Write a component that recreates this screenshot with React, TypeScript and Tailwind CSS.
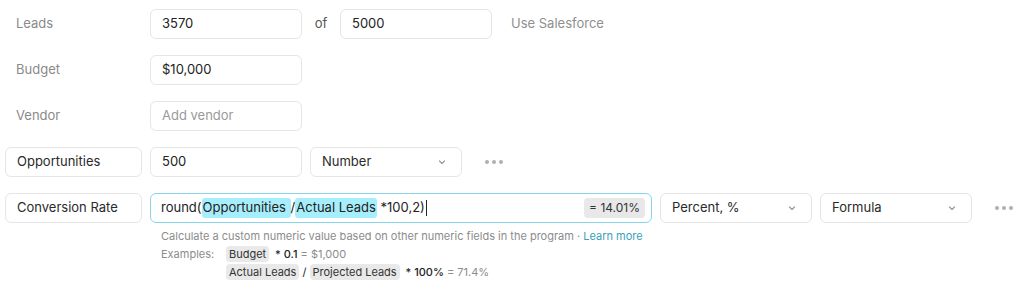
import React from "react";

const font = { fontFamily: "Inter, 'Noto Sans', sans-serif" };

function Chevron() {
  return (
    <svg width="10" height="10" viewBox="0 0 10 10" className="text-[#9a9a9a]">
      <path d="M2.5 4 L5 6.5 L7.5 4" fill="none" stroke="currentColor" strokeWidth="1.2" strokeLinecap="round" strokeLinejoin="round" />
    </svg>
  );
}

function Dots() {
  return (
    <div className="flex items-center gap-[3px] px-[8px]">
      <span className="w-[4px] h-[4px] rounded-full bg-[#b0b0b0]" />
      <span className="w-[4px] h-[4px] rounded-full bg-[#b0b0b0]" />
      <span className="w-[4px] h-[4px] rounded-full bg-[#b0b0b0]" />
    </div>
  );
}

function Box({ children, className = "" }: { children: React.ReactNode; className?: string }) {
  return (
    <div className={`h-[30px] flex items-center px-[11px] border border-[#e6e6e6] rounded-[6px] bg-white text-[13px] ${className}`}>
      {children}
    </div>
  );
}

function Select({ value }: { value: string }) {
  return (
    <Box className="w-[152px] justify-between text-[#2a2a2a] pr-[14px]">
      <span>{value}</span>
      <Chevron />
    </Box>
  );
}

function Label({ children }: { children: React.ReactNode }) {
  return <div className="w-[137px] pl-[11px] text-[13px] text-[#8a8a8a]">{children}</div>;
}

function Chip({ children }: { children: React.ReactNode }) {
  return <span className="bg-[#e9e9e9] rounded-[4px] px-[3px] py-[1px] text-[#333]">{children}</span>;
}

export default function App() {
  return (
    <div className="w-[1024px] h-[290px] bg-white pl-[5px] pt-[9px]" style={font}>
      <div className="flex flex-col gap-[16px]">
        <div className="flex items-center gap-[8px]">
          <Label>Leads</Label>
          <Box className="w-[152px] text-[#222]">3570</Box>
          <span className="w-[22px] text-center text-[13px] text-[#555]">of</span>
          <Box className="w-[152px] text-[#222]">5000</Box>
          <span className="ml-[11px] text-[13px] text-[#8f8f8f]">Use Salesforce</span>
        </div>
        <div className="flex items-center gap-[8px]">
          <Label>Budget</Label>
          <Box className="w-[152px] text-[#222]">$10,000</Box>
        </div>
        <div className="flex items-center gap-[8px]">
          <Label>Vendor</Label>
          <Box className="w-[152px] text-[#9a9a9a]">Add vendor</Box>
        </div>
        <div className="flex items-center gap-[8px]">
          <Box className="w-[137px] text-[#2a2a2a]">Opportunities</Box>
          <Box className="w-[152px] text-[#222]">500</Box>
          <Select value="Number" />
          <div className="ml-[7px]"><Dots /></div>
        </div>
        <div className="flex flex-col">
          <div className="flex items-center gap-[8px]">
            <Box className="w-[137px] text-[#2a2a2a]">Conversion Rate</Box>
            <div className="w-[502px] h-[30px] flex items-center justify-between pl-[10px] pr-[6px] border-[1.5px] border-[#86d6e8] rounded-[6px] bg-white text-[13px] text-[#222]">
              <div className="flex items-center whitespace-pre">
                <span>round(</span>
                <span className="bg-[#a6eefb] rounded-[3px] px-[1px]">Opportunities </span>
                <span>/</span>
                <span className="bg-[#a6eefb] rounded-[3px] px-[1px]">Actual Leads</span>
                <span> *100,2)</span>
                <span className="inline-block w-[1px] h-[16px] bg-[#222] ml-[1px]" />
              </div>
              <span className="bg-[#e8e8e8] rounded-[4px] px-[5px] py-[1px] text-[12px] text-[#333]">= 14.01%</span>
            </div>
            <Select value="Percent, %" />
            <Select value="Formula" />
            <div className="ml-[7px]"><Dots /></div>
          </div>
          <div className="pl-[156px] pt-[5px] text-[11px] leading-[16px]">
            <div className="text-[#8c8c8c]">
              Calculate a custom numeric value based on other numeric fields in the program · <span className="text-[#3a9fb8]">Learn more</span>
            </div>
            <div className="flex mt-[2px]">
              <span className="w-[65px] text-[#8c8c8c]">Examples:</span>
              <div className="flex flex-col gap-[2px]">
                <div className="whitespace-pre"><Chip>Budget</Chip><span className="text-[#222] font-medium">  * 0.1</span><span className="text-[#8c8c8c]"> = $1,000</span></div>
                <div className="whitespace-pre"><Chip>Actual Leads</Chip><span className="text-[#222]"> / </span><Chip>Projected Leads</Chip><span className="text-[#222] font-medium">  * 100%</span><span className="text-[#8c8c8c]"> = 71.4%</span></div>
              </div>
            </div>
          </div>
        </div>
      </div>
    </div>
  );
}
